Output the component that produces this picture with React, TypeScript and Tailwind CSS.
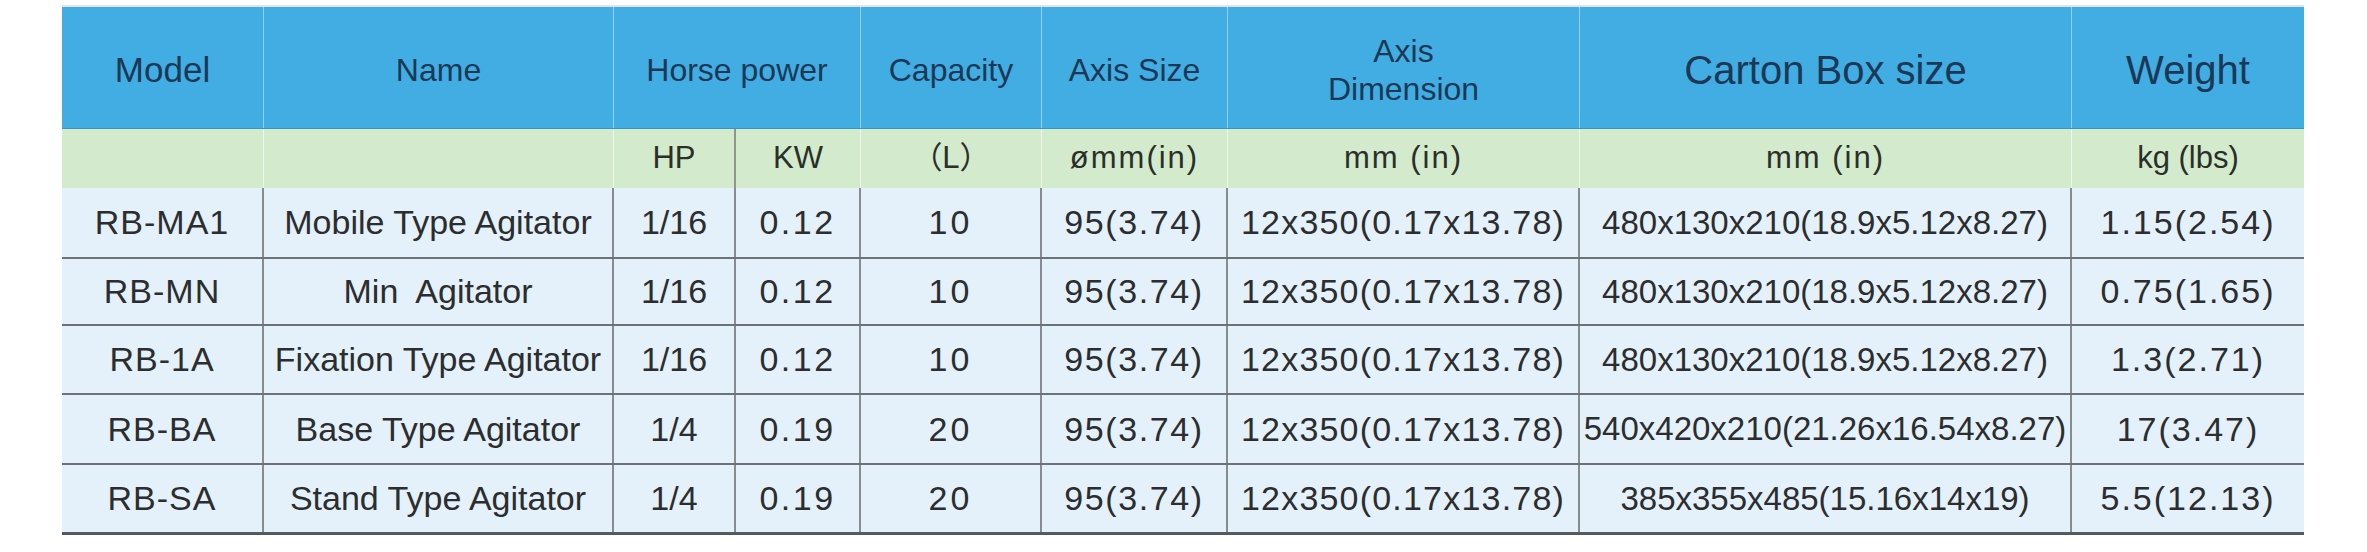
import React from "react";

const cols =
  "grid grid-cols-[202px_350px_122px_125px_181px_186px_352px_492px_232px]";

// per-column text treatment for the body rows
const bodyText = [
  "text-[34px] tracking-[1px]",
  "text-[34px]",
  "text-[34px]",
  "text-[34px] tracking-[2.5px]",
  "text-[34px] tracking-[3px]",
  "text-[34px] tracking-[1.6px]",
  "text-[34px] tracking-[1.2px]",
  "text-[33px]",
  "text-[34px] tracking-[2px]",
];

const rows = [
  {
    h: "h-[71px]",
    cells: ["RB-MA1", "Mobile Type Agitator", "1/16", "0.12", "10", "95(3.74)", "12x350(0.17x13.78)", "480x130x210(18.9x5.12x8.27)", "1.15(2.54)"],
  },
  {
    h: "h-[67px]",
    cells: ["RB-MN", "Min\u00a0 Agitator", "1/16", "0.12", "10", "95(3.74)", "12x350(0.17x13.78)", "480x130x210(18.9x5.12x8.27)", "0.75(1.65)"],
  },
  {
    h: "h-[69px]",
    cells: ["RB-1A", "Fixation Type Agitator", "1/16", "0.12", "10", "95(3.74)", "12x350(0.17x13.78)", "480x130x210(18.9x5.12x8.27)", "1.3(2.71)"],
  },
  {
    h: "h-[70px]",
    cells: ["RB-BA", "Base Type Agitator", "1/4", "0.19", "20", "95(3.74)", "12x350(0.17x13.78)", "540x420x210(21.26x16.54x8.27)", "17(3.47)"],
  },
  {
    h: "h-[70px]",
    cells: ["RB-SA", "Stand Type Agitator", "1/4", "0.19", "20", "95(3.74)", "12x350(0.17x13.78)", "385x355x485(15.16x14x19)", "5.5(12.13)"],
  },
];

function HeadCell({ children, className = "" }: { children?: React.ReactNode; className?: string }) {
  return (
    <div
      className={`flex items-center justify-center pt-[4px] text-center leading-[38px] text-[32px] text-[#1b3856] border-r border-[#8ed2f2] ${className}`}
    >
      {children}
    </div>
  );
}

function UnitCell({ children, className = "" }: { children?: React.ReactNode; className?: string }) {
  return (
    <div
      className={`flex items-center justify-center whitespace-pre text-[31px] text-[#2a2f2a] border-r border-[#eef6ec] ${className}`}
    >
      {children}
    </div>
  );
}

export default function App() {
  return (
    <div className="w-[2367px] h-[552px] bg-white pt-[5px] pl-[62px] font-['Liberation_Sans',Arial,'Noto_Sans_CJK_SC',sans-serif]">
      <div className="w-[2242px] border-t-2 border-[#e1e6e8]">
        {/* title row */}
        <div className={`${cols} h-[122px] bg-[#42ade2] border-b border-[#3596c2]`}>
          <HeadCell className="text-[35px]">Model</HeadCell>
          <HeadCell>Name</HeadCell>
          <HeadCell className="col-span-2">Horse power</HeadCell>
          <HeadCell>Capacity</HeadCell>
          <HeadCell>Axis Size</HeadCell>
          <HeadCell className="flex-col">
            <span>Axis</span>
            <span>Dimension</span>
          </HeadCell>
          <HeadCell className="text-[40px]">Carton Box size</HeadCell>
          <HeadCell className="text-[40px] border-r-0">Weight</HeadCell>
        </div>

        {/* units row */}
        <div className={`${cols} h-[59px] bg-[#d3eacc]`}>
          <UnitCell />
          <UnitCell />
          <UnitCell className="border-r-2 border-r-[#8e968e]">HP</UnitCell>
          <UnitCell>KW</UnitCell>
          <UnitCell>（L）</UnitCell>
          <UnitCell className="tracking-[2px]">ømm(in)</UnitCell>
          <UnitCell className="tracking-[2px]">mm (in)</UnitCell>
          <UnitCell className="tracking-[2px]">mm (in)</UnitCell>
          <UnitCell className="text-[25px] border-r-0">kg (lbs)</UnitCell>
        </div>

        {/* data rows */}
        {rows.map((row, i) => (
          <div
            key={row.cells[0]}
            className={`${cols} ${row.h} bg-[#e4f1fa] ${
              i === rows.length - 1
                ? "border-b-[3px] border-[#555a5e]"
                : "border-b-2 border-[#6c7277]"
            }`}
          >
            {row.cells.map((c, j) => (
              <div
                key={j}
                className={`flex items-center justify-center whitespace-nowrap text-[#2b2d2f] ${bodyText[j]} ${
                  j < row.cells.length - 1 ? "border-r-2 border-[#868c92]" : ""
                }`}
              >
                {c}
              </div>
            ))}
          </div>
        ))}
      </div>
    </div>
  );
}
